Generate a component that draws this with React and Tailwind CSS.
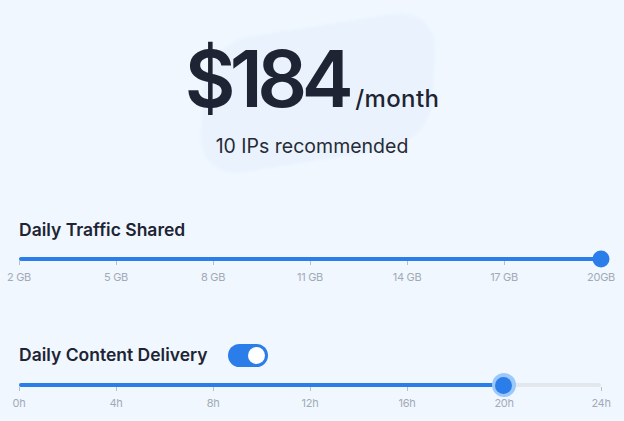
import React from 'react';

const font = { fontFamily: 'Inter, "Noto Sans", sans-serif' };

function Ticks({ labels }) {
  return (
    <div className="flex justify-between pl-[19px] pr-[23px]">
      {labels.map((l) => (
        <div key={l} className="w-0 flex flex-col items-center">
          <div className="w-px h-[4px] bg-[#b8bec8]" />
          <span className="mt-[7px] text-[11px] leading-none text-[#a3aab6] whitespace-nowrap tracking-[-0.3px]">{l}</span>
        </div>
      ))}
    </div>
  );
}

function Slider({ pct, labels, halo }) {
  return (
    <div>
      <div className="pl-[19px] pr-[23px]">
        <div className="relative h-[4px] rounded-full bg-[#e3e8ef]">
          <div className="absolute left-0 top-0 h-full rounded-full bg-[#2b7de9]" style={{ width: `${pct}%` }} />
          {halo ? (
            <div
              className="absolute top-1/2 -translate-x-1/2 -translate-y-1/2 w-[24px] h-[24px] rounded-full bg-[#9cc8fb] flex items-center justify-center"
              style={{ left: `${pct}%` }}
            >
              <div className="w-[17px] h-[17px] rounded-full bg-[#2b7de9]" />
            </div>
          ) : (
            <div
              className="absolute top-1/2 -translate-x-1/2 -translate-y-1/2 w-[17px] h-[17px] rounded-full bg-[#2b7de9]"
              style={{ left: `${pct}%` }}
            />
          )}
        </div>
      </div>
      <Ticks labels={labels} />
    </div>
  );
}

export default function App() {
  return (
    <div className="relative w-[624px] h-[421px] overflow-hidden bg-[#f0f7ff] text-[#1e2433]" style={font}>
      {/* soft backdrop behind price */}
      <div className="absolute left-[200px] top-[26px] w-[236px] h-[134px] rounded-[44px] bg-[#e7f1fd] opacity-60 rotate-[-9deg] skew-x-[-12deg] blur-[1px]" />

      <div className="relative flex flex-col">
        <div className="flex flex-col items-center pt-[37px]">
          <div className="flex items-baseline">
            <span className="text-[78px] leading-[84px] font-semibold tracking-[-5.5px]">$184</span>
            <span className="text-[24px] font-medium ml-[7px] tracking-[0.4px]">/month</span>
          </div>
          <div className="mt-[13px] text-[19.5px] leading-[24px] text-[#262b36]">10 IPs recommended</div>
        </div>

        <div className="mt-[60px]">
          <h2 className="px-[19px] text-[17.5px] leading-[24px] font-semibold">Daily Traffic Shared</h2>
          <div className="mt-[15px]">
            <Slider pct={100} labels={['2 GB', '5 GB', '8 GB', '11 GB', '14 GB', '17 GB', '20GB']} />
          </div>
        </div>

        <div className="mt-[60px]">
          <div className="px-[19px] flex items-center gap-[20px]">
            <h2 className="text-[17.5px] leading-[24px] font-semibold">Daily Content Delivery</h2>
            <div className="w-[40px] h-[23px] rounded-full bg-[#2b7de9] flex items-center justify-end pr-[3px]">
              <div className="w-[17px] h-[17px] rounded-full bg-white" />
            </div>
          </div>
          <div className="mt-[16px]">
            <Slider pct={83.3} halo labels={['0h', '4h', '8h', '12h', '16h', '20h', '24h']} />
          </div>
        </div>
      </div>
    </div>
  );
}
